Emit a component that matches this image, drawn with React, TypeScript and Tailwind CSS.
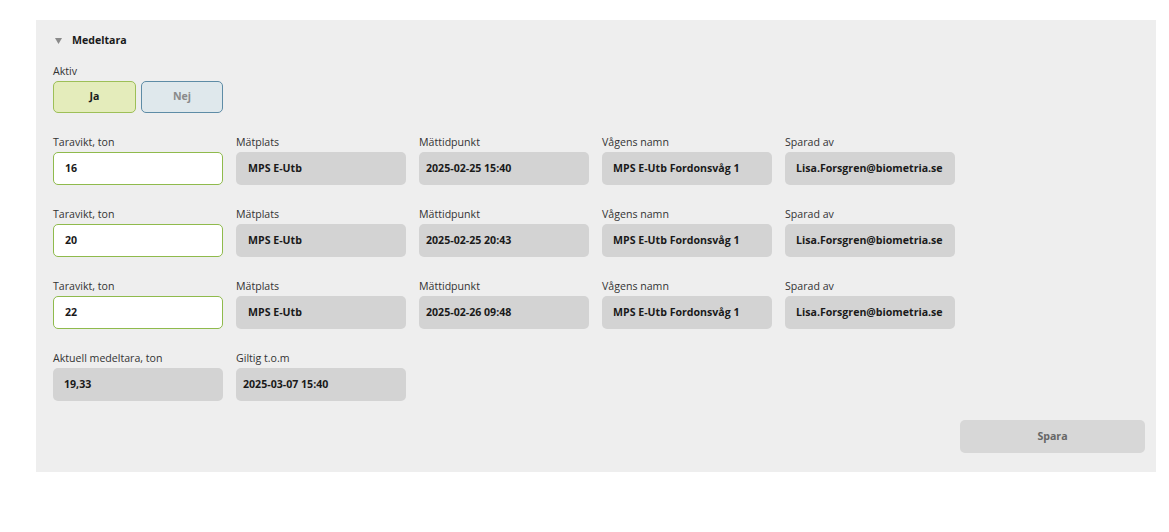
const rows = [
  { tara: '16', plats: 'MPS E-Utb', tid: '2025-02-25 15:40', vag: 'MPS E-Utb Fordonsvåg 1', av: 'Lisa.Forsgren@biometria.se' },
  { tara: '20', plats: 'MPS E-Utb', tid: '2025-02-25 20:43', vag: 'MPS E-Utb Fordonsvåg 1', av: 'Lisa.Forsgren@biometria.se' },
  { tara: '22', plats: 'MPS E-Utb', tid: '2025-02-26 09:48', vag: 'MPS E-Utb Fordonsvåg 1', av: 'Lisa.Forsgren@biometria.se' },
]

function Field({ label, children }: { label: string; children: React.ReactNode }) {
  return (
    <div className="flex flex-col gap-[2px] w-[170px]">
      <div className="h-[16px] leading-[16px] text-[10.6px] text-[#333]">{label}</div>
      {children}
    </div>
  )
}

function ReadOnly({ value, pad = 'px-[12px]' }: { value: string; pad?: string }) {
  return (
    <div className={`h-[33px] rounded-[5px] bg-[#d3d3d3] flex items-center ${pad} text-[10.6px] font-bold text-[#1a1a1a] whitespace-nowrap`}>
      {value}
    </div>
  )
}

function Input({ value }: { value: string }) {
  return (
    <div className="h-[33px] rounded-[5px] bg-white border border-[#8fba4c] flex items-center px-[11px] text-[10.6px] font-bold text-[#1a1a1a]">
      {value}
    </div>
  )
}

export default function App() {
  return (
    <div className="min-h-screen bg-white pt-[20px] pl-[36px]" style={{ fontFamily: '"Open Sans", "Noto Sans", sans-serif' }}>
      <div className="w-[1120px] bg-[#eeeeee] pl-[17px] pr-[11px] pt-[12px] pb-[19px]">
        {/* ── Header ── */}
        <div className="h-[18px] flex items-center">
          <svg width="7" height="6" viewBox="0 0 7 6" className="ml-[2px]">
            <polygon points="0,0 7,0 3.5,6" fill="#8a8a8a" />
          </svg>
          <span className="ml-[10px] text-[10.6px] font-bold text-[#1a1a1a]">Medeltara</span>
        </div>

        {/* ── Aktiv ── */}
        <div className="mt-[13px] h-[16px] leading-[16px] text-[10.6px] text-[#333]">Aktiv</div>
        <div className="mt-[2px] flex gap-[5px]">
          <button className="w-[83px] h-[32px] rounded-[5px] bg-[#e4ecbb] border border-[#9dbf57] text-[10.6px] font-bold text-[#1a1a1a]">
            Ja
          </button>
          <button className="w-[82px] h-[32px] rounded-[5px] bg-[#dfe8ec] border border-[#5e8ca6] text-[10.6px] font-bold text-[#8a8a8a]">
            Nej
          </button>
        </div>

        {/* ── Rows ── */}
        <div className="mt-[21px] flex flex-col gap-[21px]">
          {rows.map((r, i) => (
            <div key={i} className="flex gap-[13px]">
              <Field label="Taravikt, ton"><Input value={r.tara} /></Field>
              <Field label="Mätplats"><ReadOnly value={r.plats} /></Field>
              <Field label="Mättidpunkt"><ReadOnly value={r.tid} pad="px-[7px]" /></Field>
              <Field label="Vågens namn"><ReadOnly value={r.vag} pad="px-[11px]" /></Field>
              <Field label="Sparad av"><ReadOnly value={r.av} pad="px-[11px]" /></Field>
            </div>
          ))}
          <div className="flex gap-[13px]">
            <Field label="Aktuell medeltara, ton"><ReadOnly value="19,33" pad="px-[11px]" /></Field>
            <Field label="Giltig t.o.m"><ReadOnly value="2025-03-07 15:40" pad="px-[7px]" /></Field>
          </div>
        </div>

        {/* ── Footer ── */}
        <div className="mt-[19px] flex justify-end">
          <button className="w-[185px] h-[33px] rounded-[5px] bg-[#d7d7d7] text-[10.6px] font-bold text-[#666]">
            Spara
          </button>
        </div>
      </div>
    </div>
  )
}
